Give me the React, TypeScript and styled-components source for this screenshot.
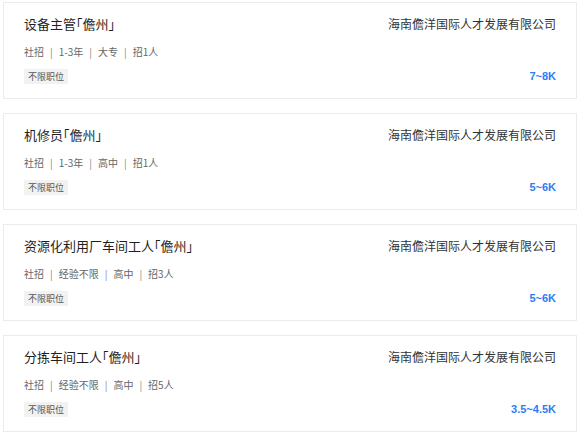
import styled, { createGlobalStyle } from "styled-components";

type Job = {
  title: string;
  city: string;
  company: string;
  experience: string;
  education: string;
  headcount: number;
  salary: string;
};

const jobs: Job[] = [
  {
    title: "设备主管",
    city: "儋州",
    company: "海南儋洋国际人才发展有限公司",
    experience: "1-3年",
    education: "大专",
    headcount: 1,
    salary: "7~8K",
  },
  {
    title: "机修员",
    city: "儋州",
    company: "海南儋洋国际人才发展有限公司",
    experience: "1-3年",
    education: "高中",
    headcount: 1,
    salary: "5~6K",
  },
  {
    title: "资源化利用厂车间工人",
    city: "儋州",
    company: "海南儋洋国际人才发展有限公司",
    experience: "经验不限",
    education: "高中",
    headcount: 3,
    salary: "5~6K",
  },
  {
    title: "分拣车间工人",
    city: "儋州",
    company: "海南儋洋国际人才发展有限公司",
    experience: "经验不限",
    education: "高中",
    headcount: 5,
    salary: "3.5~4.5K",
  },
];

function JobCard({ job }: { job: Job }) {
  const meta = ["社招", job.experience, job.education, `招${job.headcount}人`];

  return (
    <Card>
      <Left>
        <Title>
          {job.title}「{job.city}」
        </Title>
        <Meta>
          {meta.map((item, i) => (
            <span key={i}>
              {i > 0 && <Sep>|</Sep>}
              {item}
            </span>
          ))}
        </Meta>
        <Tag>不限职位</Tag>
      </Left>
      <Right>
        <Company>{job.company}</Company>
        <Salary>{job.salary}</Salary>
      </Right>
    </Card>
  );
}

export default function App() {
  return (
    <>
      <GlobalStyle />
      <List>
        {jobs.map((job, i) => (
          <JobCard key={i} job={job} />
        ))}
      </List>
    </>
  );
}

const GlobalStyle = createGlobalStyle`
  body {
    margin: 0;
    background: #fff;
    font-family: "Noto Sans CJK SC", "Noto Sans", sans-serif;
  }
`;

const List = styled.ul`
  list-style: none;
  margin: 0;
  padding: 2px 0 0 3px;
  width: 574px;
  display: flex;
  flex-direction: column;
  gap: 14px;
`;

const Card = styled.li`
  box-sizing: border-box;
  height: 97px;
  border: 1px solid #ebebeb;
  padding: 11px 20px 14px 20px;
  display: flex;
  justify-content: space-between;
  white-space: nowrap;
`;

const Left = styled.div`
  flex: 1;
  min-width: 0;
  display: flex;
  flex-direction: column;
  align-items: flex-start;
`;

// "halt" gives the corner brackets their half-width forms
const Title = styled.h3`
  margin: 0;
  font-size: 13px;
  font-weight: 400;
  line-height: 20px;
  color: #1f1f1f;
  font-feature-settings: "halt" 1;
`;

const Meta = styled.p`
  margin: 10px 0 0;
  font-size: 10px;
  line-height: 16px;
  color: #666;
`;

const Sep = styled.span`
  margin: 0 6px;
  color: #888;
`;

const Tag = styled.span`
  margin-top: 9px;
  padding: 0 4px;
  height: 15px;
  line-height: 15px;
  font-size: 9px;
  color: #555;
  background: #f2f2f2;
`;

const Right = styled.div`
  flex: none;
  display: flex;
  flex-direction: column;
  align-items: flex-end;
  justify-content: space-between;
`;

const Company = styled.div`
  font-size: 12px;
  line-height: 20px;
  color: #333;
`;

const Salary = styled.div`
  font-family: "Liberation Sans", Arial, sans-serif;
  font-size: 11px;
  font-weight: 700;
  line-height: 16px;
  color: #2d7cf6;
`;
